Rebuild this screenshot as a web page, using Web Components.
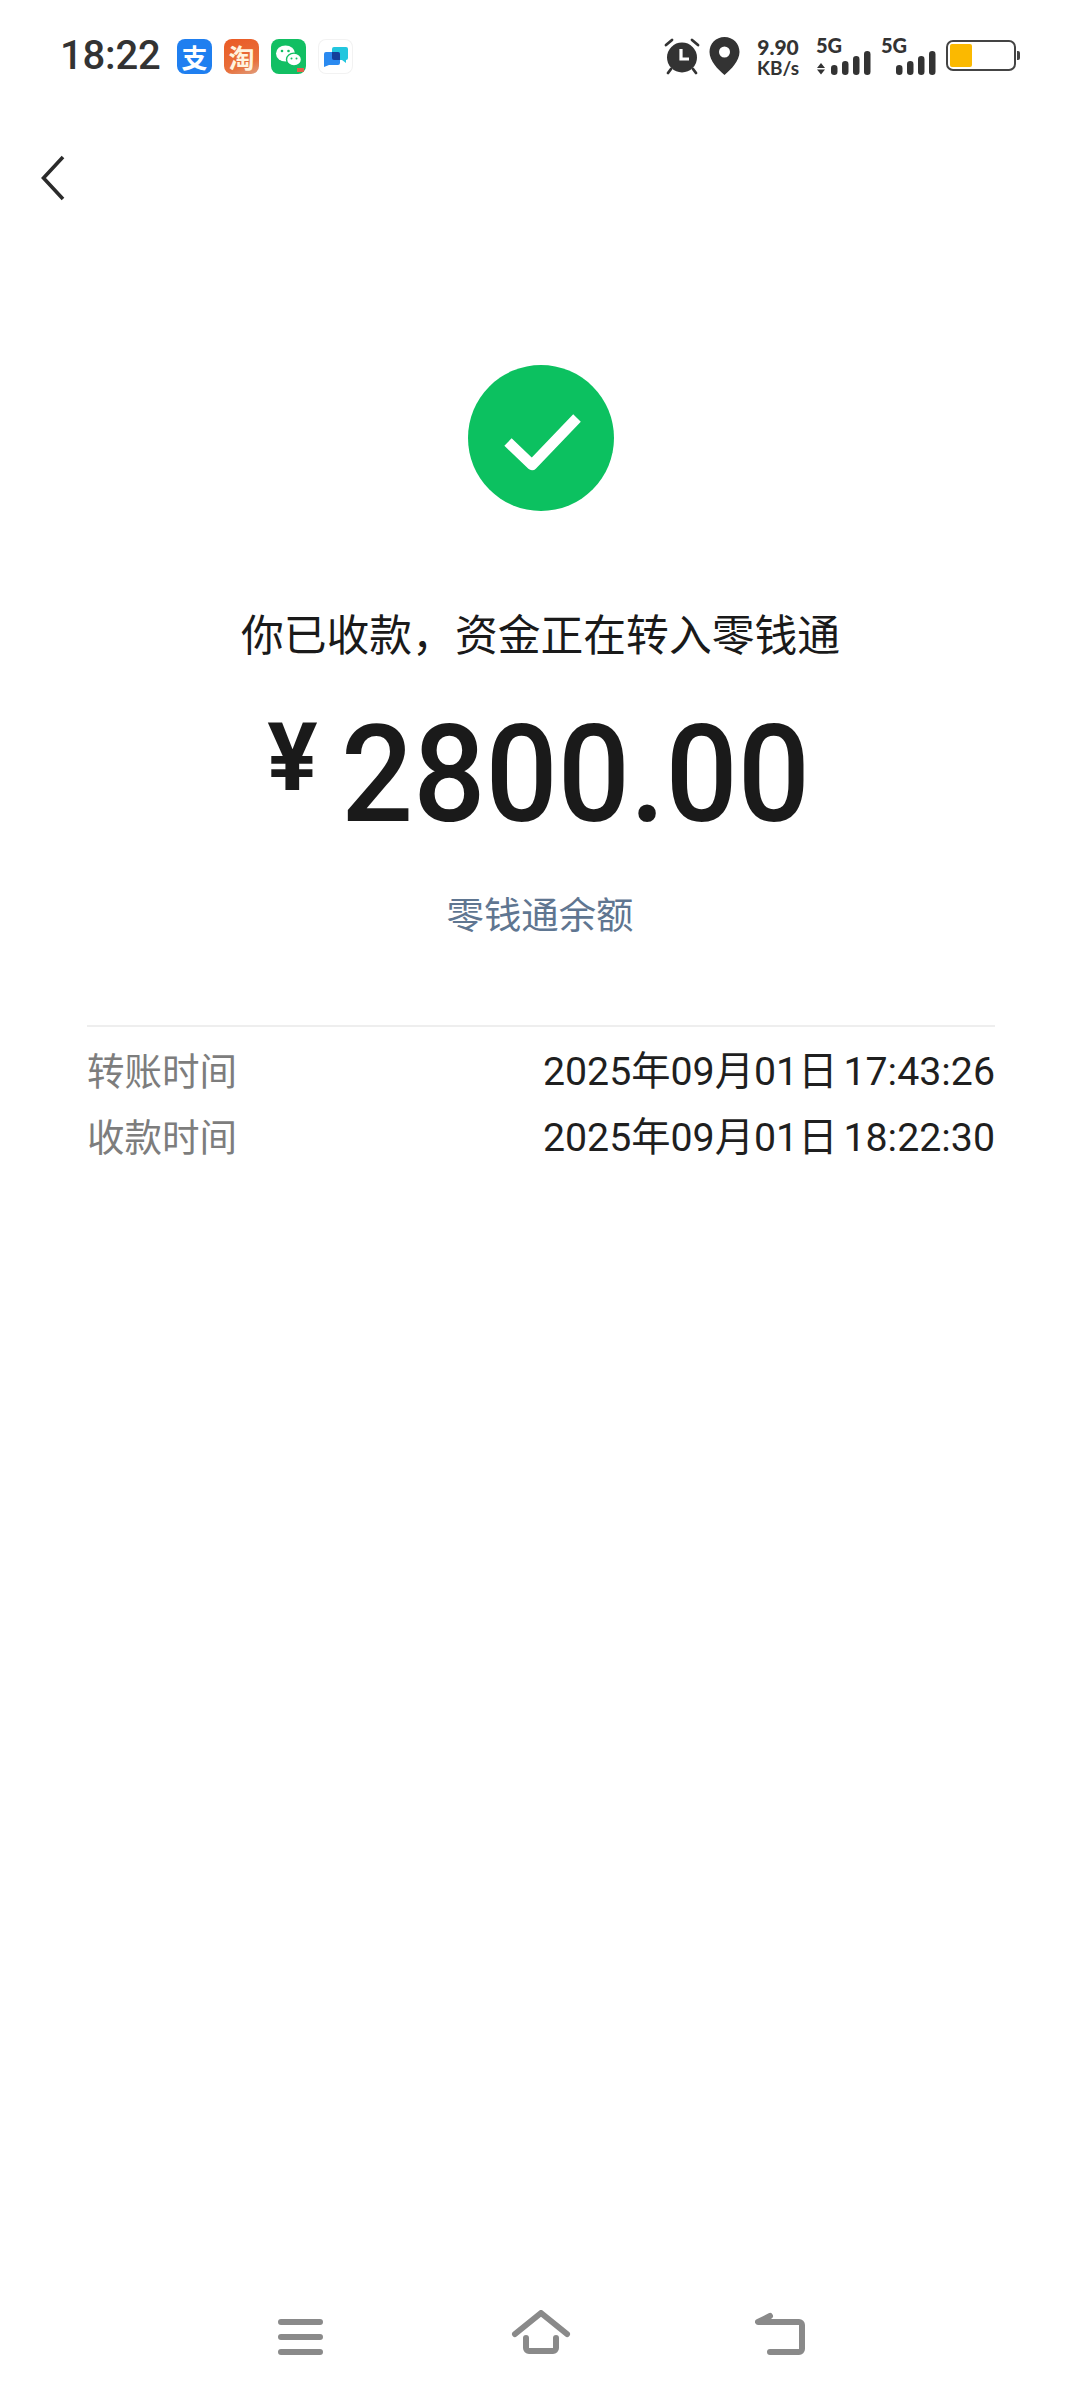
<!DOCTYPE html>
<html lang="zh"><head><meta charset="utf-8"><title>收款</title>
<style>
html,body{margin:0;padding:0;background:#fff}
body{width:1080px;height:2400px;display:flex;flex-direction:column;font-family:Roboto,"Noto Sans CJK SC",sans-serif;color:#1a1a1a;overflow:hidden}
</style></head><body>
<status-bar></status-bar>
<top-bar></top-bar>
<result-panel>
  <span slot="title">你已收款，资金正在转入零钱通</span>
  <span slot="amount">2800.00</span>
  <span slot="link">零钱通余额</span>
</result-panel>
<detail-list>
  <detail-row label="转账时间" value="2025年09月01日 17:43:26"></detail-row>
  <detail-row label="收款时间" value="2025年09月01日 18:22:30"></detail-row>
</detail-list>
<nav-bar></nav-bar>
<script>
function def(name, html){
  customElements.define(name, class extends HTMLElement{
    constructor(){super();this.attachShadow({mode:'open'}).innerHTML=typeof html==='function'?html(this):html;}
  });
}
const bars='<rect x="15" y="14" width="6.500" height="10" rx="3.200"/><rect x="26" y="10" width="6.500" height="14" rx="3.200"/><rect x="37" y="5" width="6.500" height="19" rx="3.200"/><rect x="48" y="0" width="6.500" height="24" rx="3.200"/>';
def('status-bar',`<style>
:host{display:flex;align-items:center;height:112px;padding:0 60px 0 60px;box-sizing:border-box;flex:none;color:#333}
.time{font:500 40px/44px Roboto,sans-serif;width:117px;letter-spacing:-.2px}
.apps{display:flex;gap:12px}
.app{width:35px;height:35px;border-radius:8px;display:flex;align-items:center;justify-content:center;overflow:hidden;color:#fff;font:700 26px/35px "Noto Sans CJK SC",sans-serif}
.ali{background:#1f7ff0}.tao{background:linear-gradient(160deg,#ea5a24,#e8703c 70%,#e0a080);color:#fff3de}
.wx{background:#12bf63}.msg{background:#fff;box-shadow:inset 0 0 0 1px #f2f2f2}
.right{display:flex;align-items:center;margin-left:auto}
svg{display:block}
.speed{display:flex;flex-direction:column;align-items:center;width:44px;margin:0 16px 0 16px;color:#333}
.speed b{font:900 21px/23px Lato,sans-serif}
.speed span{font:700 19px/20px Lato,sans-serif}
.sim{display:flex;flex-direction:column;width:56px;font:900 20px/14px Lato,sans-serif;height:38px;position:relative;top:1px}
.sim span{position:relative;z-index:1;width:max-content}
.sim svg{margin-top:-1px}
.batt{margin-left:9px}
</style>
<div class="time">18:22</div>
<div class="apps">
 <div class="app ali">支</div>
 <div class="app tao">淘</div>
 <div class="app wx"><svg width="35" height="35" viewBox="0 0 35 35"><ellipse cx="14.500" cy="14.500" rx="9.500" ry="8" fill="#fff"/><ellipse cx="23" cy="20.500" rx="7.500" ry="6.400" fill="#fff" stroke="#12bf63" stroke-width="1.400"/><circle cx="11" cy="12" r="1.300" fill="#12bf63"/><circle cx="17.500" cy="12" r="1.300" fill="#12bf63"/><circle cx="20.500" cy="19.500" r="1" fill="#12bf63"/><circle cx="25.500" cy="19.500" r="1" fill="#12bf63"/><rect x="26" y="29" width="7" height="4" fill="#e2604a"/></svg></div>
 <div class="app msg"><svg width="35" height="35" viewBox="0 0 35 35"><path d="M16 8h12a2 2 0 0 1 2 2v9a2 2 0 0 1-2 2v3l-4-3h-8a2 2 0 0 1-2-2v-9a2 2 0 0 1 2-2z" fill="#22c6de"/><path d="M8 13h12a2 2 0 0 1 2 2v9a2 2 0 0 1-2 2h-9l-5 2V15a2 2 0 0 1 2-2z" fill="#2b8af0"/><path d="M14 13h6a2 2 0 0 1 2 2v6h-6a2 2 0 0 1-2-2z" fill="#143f9a"/></svg></div>
</div>
<div class="right">
 <svg width="38" height="38" viewBox="0 0 38 38"><g stroke="#333" stroke-width="2.800" stroke-linecap="round"><path d="M3 8l6-5M35 8l-6-5M8 32l-3 4M30 32l3 4"/></g><circle cx="19" cy="20.500" r="15" fill="#333"/><path d="M18 12v10h8" fill="none" stroke="#fff" stroke-width="3.200"/></svg>
 <svg style="margin-left:8px" width="31" height="38" viewBox="0 0 31 38"><path fill-rule="evenodd" d="M15.500 0C7 0 0.500 6.500 0.500 15c0 9 8.500 17.500 15 23 6.500-5.500 15-14 15-23C30.500 6.500 24 0 15.500 0zm0 9.500a5.500 5.500 0 1 1 0 11 5.500 5.500 0 0 1 0-11z" fill="#333"/></svg>
 <div class="speed"><b>9.90</b><span>KB/s</span></div>
 <div class="sim" style="width:58px"><span>5G</span><svg width="58" height="24" viewBox="0 0 58 24"><path d="M1 17l4-5 4 5zM1 18.500l4 5 4-5z" fill="#333"/><g fill="#333">${bars}</g></svg></div>
 <div class="sim" style="margin-left:7px"><span>5G</span><svg width="56" height="24" viewBox="0 0 56 24"><g fill="#333">${bars}</g></svg></div>
 <svg class="batt" width="74" height="32" viewBox="0 0 74 32"><rect x="1" y="1" width="68" height="29" rx="6" fill="#fff" stroke="#444" stroke-width="2"/><rect x="4" y="4" width="22" height="23" rx="2" fill="#fbb900"/><path d="M71 11h1a2 2 0 0 1 2 2v5a2 2 0 0 1-2 2h-1z" fill="#444"/></svg>
</div>`);
def('top-bar',`<style>
:host{display:flex;align-items:center;height:132px;padding-left:41px;flex:none}
svg{display:block}
</style><svg width="24" height="46" viewBox="0 0 24 46"><path d="M22 2 2.500 23 22 44" fill="none" stroke="#2b2b2b" stroke-width="3.600"/></svg>`);
def('result-panel',`<style>
:host{display:flex;flex-direction:column;align-items:center;flex:none;padding-top:121px}
.ok{display:block;margin-left:1px}
.title{font:400 42.800px/60px "Noto Sans CJK SC",sans-serif;color:#1a1a1a;margin-top:91px;margin-left:1px;white-space:nowrap}
.amount{display:flex;align-items:flex-start;margin-top:45px;height:136px;color:#1a1a1a;margin-left:-12px}
.yen{font:700 94px/94px Roboto,sans-serif;margin-top:4px;margin-right:25px;width:47px;display:flex;justify-content:center}
.num{display:block;width:458px;font:500 136px/136px Roboto,sans-serif;white-space:nowrap;transform:scaleX(.935);transform-origin:0 0}
.link{font:400 37.400px/50px "Noto Sans CJK SC",sans-serif;color:#5f7691;margin-top:45px}
</style>
<svg class="ok" width="146" height="146" viewBox="0 0 146 146"><circle cx="73" cy="73" r="73" fill="#0cc160"/><path d="M40 77l24 23 45-47" fill="none" stroke="#fff" stroke-width="10.500" stroke-linejoin="round"/></svg>
<div class="title"><slot name="title"></slot></div>
<div class="amount"><span class="yen">¥</span><span class="num"><slot name="amount"></slot></span></div>
<div class="link"><slot name="link"></slot></div>`);
def('detail-list',`<style>
:host{display:flex;flex-direction:column;flex:none;margin:87px 85px 0 87px;border-top:2px solid #eeeeee;padding-top:12px;gap:0}
</style><slot></slot>`);
def('detail-row',el=>{
  const [d,t]=(el.getAttribute('value')||'').split(' ');
  return `<style>
:host{display:flex;justify-content:space-between;align-items:baseline;height:66px;font:400 37.500px/66px Roboto,"Noto Sans CJK SC",sans-serif}
.l{color:#7d7d7d}
.v{color:#1f1f1f;font-size:39.300px;white-space:nowrap}
.t{margin-left:6px}
</style><span class="l">${el.getAttribute('label')}</span><span class="v">${d}<span class="t">${t}</span></span>`;
});
def('nav-bar',`<style>
:host{display:flex;justify-content:center;align-items:flex-start;margin-top:auto;height:90px;flex:none;box-sizing:border-box;padding-left:2px}
svg{display:block;fill:none;stroke:#8a8a8a;stroke-width:6;stroke-linecap:round;stroke-linejoin:round}
svg:nth-of-type(2){margin:0 182px 0 185px}
</style>
<svg width="50" height="46" viewBox="0 0 50 46"><path d="M5 12h39M5 27h39M5 42h39"/></svg>
<svg width="62" height="46" viewBox="0 0 62 46"><path d="M4 24 30 3l26 21"/><path d="M15 28v10a3 3 0 0 0 3 3h24a3 3 0 0 0 3-3V28"/></svg>
<svg width="52" height="46" viewBox="0 0 52 46"><path d="M15 6 3 12h41a3 3 0 0 1 3 3v24a3 3 0 0 1-3 3H15"/></svg>`);
</script>
</body></html>
